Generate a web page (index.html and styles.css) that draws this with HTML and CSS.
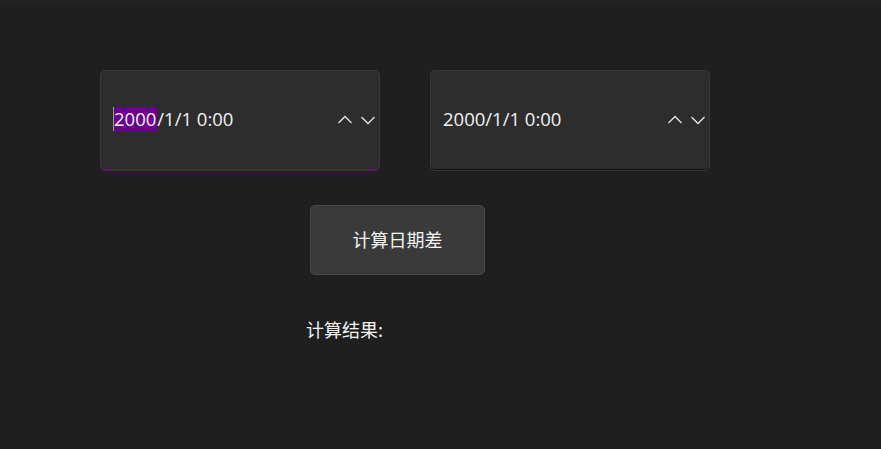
FILE: index.html
```html
<!DOCTYPE html>
<html>
<head lang="zh">
    <meta charset="UTF-8">
    <title>日期差</title>
    <link rel="stylesheet" href="styles.css">
</head>
<body>
<div class="titlebar"></div>
<div class="pickers">
    <div class="picker focused">
        <span class="value"><span class="caret"></span><span class="sel">2000</span>/1/1 0:00</span>
        <span class="spin">
            <svg width="16" height="10" viewBox="0 0 16 10"><path d="M1.5 8 L8 1.5 L14.5 8" fill="none" stroke="#e6e6e6" stroke-width="1.3"/></svg>
            <svg width="16" height="10" viewBox="0 0 16 10"><path d="M1.5 2 L8 8.5 L14.5 2" fill="none" stroke="#e6e6e6" stroke-width="1.3"/></svg>
        </span>
    </div>
    <div class="picker">
        <span class="value">2000/1/1 0:00</span>
        <span class="spin">
            <svg width="16" height="10" viewBox="0 0 16 10"><path d="M1.5 8 L8 1.5 L14.5 8" fill="none" stroke="#e6e6e6" stroke-width="1.3"/></svg>
            <svg width="16" height="10" viewBox="0 0 16 10"><path d="M1.5 2 L8 8.5 L14.5 2" fill="none" stroke="#e6e6e6" stroke-width="1.3"/></svg>
        </span>
    </div>
</div>
<button class="calc">计算日期差</button>
<div class="result">计算结果:</div>
</body>
</html>
```

FILE: styles.css
```css
*{
    margin: 0;
    padding: 0;
    box-sizing: border-box;
}
body{
    background: #1f1f1f;
    width: 881px;
    height: 449px;
    overflow: hidden;
    font-family: "Open Sans", "Noto Sans CJK SC", sans-serif;
    color: #f2f2f2;
}
.titlebar{
    height: 7px;
    background: #232323;
}
.pickers{
    display: flex;
    gap: 50px;
    margin: 63px 0 0 100px;
}
.picker{
    width: 280px;
    height: 101px;
    background: #2d2d2d;
    border: 1px solid #383838;
    border-radius: 5px;
    display: flex;
    align-items: center;
    padding: 0 3px 0 12px;
    position: relative;
    box-shadow: inset 0 -1px 0 #111;
}
.picker.focused{
    box-shadow: inset 0 -1px 0 #6a0a8a;
}
.value{
    flex: 1;
    font-size: 18.5px;
    line-height: 24px;
    display: flex;
    align-items: center;
    margin-top: -3px;
}
.caret{
    width: 2px;
    height: 24px;
    background: #9a9a9a;
}
.sel{
    background: #6b0090;
    margin-left: -1px;
    padding-right: 1px;
}
.spin{
    display: flex;
    gap: 7px;
    align-items: center;
    margin-top: -2px;
}
.spin svg{
    display: block;
}
.calc{
    display: block;
    margin: 34px 0 0 310px;
    width: 175px;
    height: 70px;
    background: #3a3a3a;
    border: 1px solid #474747;
    border-radius: 5px;
    color: #f5f5f5;
    font-family: "Noto Sans CJK SC", sans-serif;
    font-size: 18px;
    padding-bottom: 3px;
}
.result{
    margin: 42px 0 0 306px;
    font-family: "Noto Sans CJK SC", sans-serif;
    font-size: 18px;
    line-height: 24px;
}
```
